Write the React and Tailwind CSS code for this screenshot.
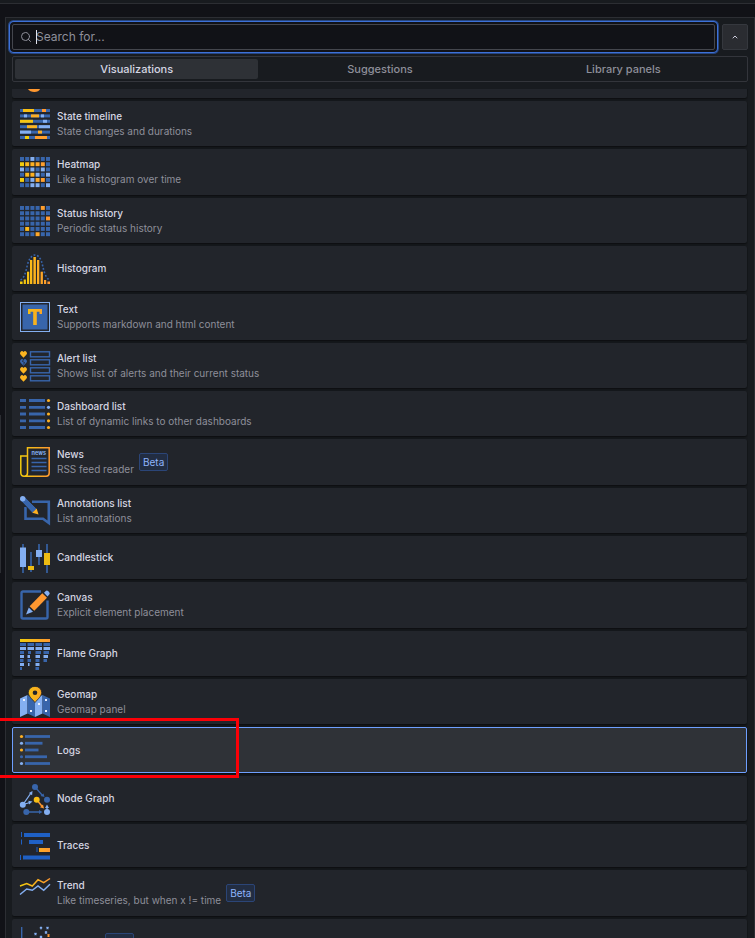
import { useState } from 'react'
import clsx from 'clsx'
import { ChevronUp, Search } from 'lucide-react'

const BLUE = '#3865ab'
const LIGHT = '#84aff1'
const ORANGE = 'url(#warm)'

const fills = { B: BLUE, L: LIGHT, O: ORANGE }

// each bar is [x, y, width, height, fill]
function Bars({ items }) {
    return items.map(([x, y, w, h, fill], i) => (
        <rect key={i} x={x} y={y} width={w} height={h} fill={fills[fill] || fill} />
    ))
}

function Cells({ rows, warm = ['#f2cc0c', '#fbb81c', '#fdb022', '#ffa828', '#ff9f2e', '#ff9830'] }) {
    return rows.map((row, r) =>
        row.split('').map((c, i) => (
            <rect key={`${r}-${i}`} x={i * 5.2} y={r * 5.25} width="4" height="3.9" fill={c === 'O' ? warm[i] : fills[c]} />
        ))
    )
}

function Heart({ x, y, fill }) {
    return <path transform={`translate(${x} ${y})`} fill={fill} d="M3.5 6.8 .6 3.7A2 2 0 0 1 .5 1 1.9 1.9 0 0 1 3.5 1 1.9 1.9 0 0 1 6.5 1a2 2 0 0 1-.1 2.7Z" />
}

const icons = {
    pie: <path d="M8 28h12c-1 4-10 4-12 0Z" fill="#ff9830" />,
    timeline: (
        <Bars items={[
            [0, 0, 30, 3, 'B'], [3, 0, 11, 3, '#f8be14'], [22, 0, 4, 3, '#ff9830'],
            [0, 5.4, 30, 3, 'B'], [4, 5.4, 3, 3, 'L'], [11, 5.4, 8, 3, '#fdae24'], [21, 5.4, 3, 3, 'L'],
            [0, 10.8, 30, 3, 'B'], [0, 10.8, 13, 3, '#f6c512'], [23, 10.8, 4, 3, 'L'],
            [0, 16.2, 30, 3, 'B'], [7, 16.2, 10, 3, '#fbb420'], [19, 16.2, 11, 3, 'L'],
            [0, 21.6, 30, 3, 'B'], [0, 21.6, 11, 3, 'L'], [18, 21.6, 4, 3, '#fdae24'],
            [0, 27, 30, 3, 'B'], [5, 27, 4, 3, '#f2cc0c'], [15, 27, 12, 3, '#ff9f2c'],
        ]} />
    ),
    heatmap: <Cells rows={['BBLBBB', 'OOOOOB', 'LBLBLB', 'BOOLBL', 'OBLOOB', 'BBLLBL']} />,
    status: <Cells rows={['BBBBOB', 'BBBBBB', 'BBBBBO', 'BBBBBB', 'BOBBBB', 'BBBOBB']} />,
    histogram: (
        <>
            <Bars items={[
                [0, 27.5, 2.6, 2.5, '#f2cc0c'], [3.7, 25.5, 2.2, 4.5, '#f4c60f'], [7, 17.7, 2.2, 12.3, '#f6c013'],
                [10, 6, 2.3, 24, '#f9ba18'], [13.4, 3, 2.5, 27, '#fbb31d'], [17, 6, 2.3, 24, '#fcad22'],
                [20.6, 17.7, 2.3, 12.3, '#fda626'], [24, 26, 2.2, 4, '#fe9f2b'], [27.4, 27.5, 2.6, 2.5, '#ff9830'],
            ]} />
            <path d="M.5 26C6 23 6.5 12 8.5 7.5S12.500 1 15 1s4.800 2 6.500 6.500S24 23 29.500 26" fill="none" stroke={BLUE} strokeWidth="1.6" strokeDasharray="1.8 1.8" />
        </>
    ),
    text: (
        <>
            <rect x=".5" y=".5" width="29" height="29" fill="none" stroke={LIGHT} />
            <rect x="2.5" y="2.5" width="25" height="25" fill={BLUE} />
            <path d="M8 7h14v5h-2.500V9.800H16.800V23h-3.600V9.800H10.500V12H8Z" fill={ORANGE} />
        </>
    ),
    alerts: (
        <>
            {[0, 8, 16, 24].map((y) => (
                <g key={y}>
                    <Heart x={0} y={y} fill={y === 8 ? BLUE : '#fbb420'} />
                    <rect x="10.5" y={y + 0.8} width="19" height="5" fill="none" stroke={BLUE} strokeWidth="1.4" />
                </g>
            ))}
            <path d="m3.500 8.500-1 2 2 1-1 2" fill="none" stroke="#22252b" strokeWidth=".8" />
        </>
    ),
    dashboards: [0, 6.8, 13.5, 20.3, 27].map((y, i) => (
        <g key={y}>
            <path d={`M0 ${y + 1.5}h6M9 ${y + 1.5}h16`} stroke={BLUE} strokeWidth="2.8" />
            <circle cx="28.5" cy={y + 1.5} r="1.6" fill={i === 1 ? LIGHT : '#fdb022'} />
        </g>
    )),
    news: (
        <>
            <path d="M7.500 26V.8h21.700V26c0 2-1 3.200-3 3.200H4C2 29.200.8 28 .8 26V9h6.700M7.500 26c0 2-1.200 3.200-3 3.200" fill="none" stroke={ORANGE} strokeWidth="1.5" />
            <path d="M11.500 11.500h15M11.500 15.500h15M11.500 19.500h15M11.500 23.500h15" stroke={BLUE} strokeWidth="1.3" />
            <text x="18.8" y="8.2" textAnchor="middle" fontSize="5.5" fontWeight="700" fill={LIGHT}>news</text>
        </>
    ),
    annotations: (
        <>
            <path d="M12 5.800h16.800V27L23 22.800H5.500V11" fill="none" stroke={BLUE} strokeWidth="2.6" />
            <path d="m.8 4.800 4-4L17 13l-4.500 4.200Z" fill={BLUE} stroke="#22252b" strokeWidth=".8" />
            <circle cx="2.7" cy="2.7" r="2.7" fill={LIGHT} />
            <path d="m12.300 16.800 4.400-4.200 1.800 6Z" fill="#fdb022" />
        </>
    ),
    candlestick: (
        <>
            <path d="M3 0v29M11 8v20M19 0v21M27 0v29" stroke={BLUE} strokeWidth="1.6" />
            <Bars items={[[0, 3.5, 6, 19.5, 'L'], [8, 22, 6, 4, '#ecbb13'], [16, 6, 6, 7, 'L'], [24, 9, 6, 12, '#ecbb13']]} />
        </>
    ),
    canvas: (
        <>
            <path d="M21 1.500H3A1.500 1.500 0 0 0 1.500 3v24A1.500 1.500 0 0 0 3 28.500h23a1.500 1.500 0 0 0 1.500-1.500V10.500" fill="none" stroke={BLUE} strokeWidth="2.4" />
            <path d="m22.300 3.200 4.700 4.600L14.300 20.800l-4.700-4.600Z" fill="#ff9830" />
            <path d="m8.800 17.500 4.200 4.200L6 24.500Z" fill={LIGHT} />
            <path d="m24 2.800 1.500-1.600a2 2 0 0 1 2.800 0l.8.8a2 2 0 0 1 0 2.800L27.500 6.500Z" fill={LIGHT} />
        </>
    ),
    flame: (
        <Bars items={[
            [0, 0, 30, 3, 'O'],
            [0, 4, 6, 3, 'B'], [7.5, 4, 6.5, 3, 'B'], [15.5, 4, 6.5, 3, 'B'], [23.5, 4, 6.5, 3, 'B'],
            [0, 8, 6, 3, 'L'], [7.5, 8, 6.5, 3, 'L'], [15.5, 8, 6.5, 3, 'L'], [23.5, 8, 6.5, 3, 'L'],
            [0, 12, 4, 3, 'B'], [8, 12, 3, 3, 'B'], [15.5, 12, 5.5, 3, 'B'], [23.5, 12, 5.5, 3, 'B'],
            [0, 16, 4, 3, 'L'], [7.5, 16, 2.5, 3, 'L'], [15.5, 16, 4.5, 3, 'L'], [23.5, 16, 4.5, 3, 'L'],
            [0, 20, 3.5, 3, 'B'], [7.5, 20, 3.5, 3, 'B'], [15.5, 20, 4, 3, 'B'], [23.5, 20, 3.5, 3, 'B'],
            [0, 24, 4, 3, 'L'], [8, 24, 1.5, 3, 'L'], [15.5, 24, 4, 3, 'L'],
            [0, 28, 2, 3, 'B'], [15.5, 28, 3.5, 3, 'B'],
        ]} />
    ),
    geomap: (
        <>
            <path d="M0 11.500 7.500 8v18.500L0 30ZM15 11.500 22.500 8v18.500L15 30Z" fill={LIGHT} />
            <path d="M7.500 8 15 11.500V30l-7.500-3.500ZM22.500 8l7.500 3.500V30l-7.500-3.500Z" fill={BLUE} />
            <path d="M15 15.500C12 12 8.300 9 8.300 5.600A6.300 6.300 0 0 1 15-.6a6.300 6.300 0 0 1 6.700 6.200C21.700 9 18 12 15 15.500Z" fill={ORANGE} stroke="#22252b" strokeWidth=".8" />
            <circle cx="15" cy="5.7" r="2.3" fill="#22252b" />
            <path d="M3 12h2v2H3ZM10 23h2v2h-2ZM18 16h2v2h-2ZM25 12h2v2h-2ZM25 23h2v2h-2Z" fill="#e8efff" />
        </>
    ),
    logs: [[30, 'O'], [22.5, 'L'], [18.5, 'O'], [27, 'B'], [30, 'L']].map(([end, dot], i) => (
        <g key={i}>
            <circle cx="1.5" cy={i * 6.75 + 1.5} r="1.6" fill={dot === 'O' ? '#fdb022' : fills[dot]} />
            <path d={`M5 ${i * 6.75 + 1.5}H${end}`} stroke={BLUE} strokeWidth="2.8" />
        </g>
    )),
    nodes: (
        <>
            <path d="m15 3 7.500 8.500M6.300 28H20" stroke={BLUE} strokeWidth="1.3" />
            <path d="m24.500 13-4-1 3-2.500ZM22.500 28l-3.500-2v4Z" fill={BLUE} />
            <path d="m3 20.500 8-11.500M3 20.500l7-2M27 28v-4" stroke={LIGHT} strokeWidth="1.3" />
            <path d="m12.500 7-.4 4.200-3.200-2.300ZM12.500 17.500 9 20.500l-.6-3.800ZM27 20.500l2 3.500h-4Z" fill={LIGHT} />
            <path d="m16.700 15.700 5.300 6.500" stroke="#ff9830" strokeWidth="1.4" />
            <path d="m24 24.500-4-1.300 3-2.700Z" fill="#ff9830" />
            <circle cx="15" cy="3" r="3" fill={BLUE} />
            <circle cx="27" cy="15.7" r="3" fill={BLUE} />
            <circle cx="6.3" cy="28" r="3" fill={BLUE} />
            <circle cx="2.8" cy="20.7" r="3" fill={LIGHT} />
            <circle cx="27" cy="28" r="3" fill={LIGHT} />
            <circle cx="16.7" cy="15.7" r="3" fill="#f9be14" />
        </>
    ),
    traces: (
        <Bars items={[
            [1, 0, 1, 5, '#1f60c4'], [4, 1, 26, 4, '#1f60c4'],
            [1, 7.5, 1, 5, '#1f60c4'], [9, 8, 14, 4, '#1f60c4'],
            [16.5, 15, 1, 5, '#1f60c4'], [19, 16, 11, 4, 'O'],
            [0, 23, 1, 5, '#1f60c4'], [3, 23.5, 27, 4, '#1f60c4'],
        ]} />
    ),
    trend: (
        <g fill="none" strokeWidth="1.5">
            <path d="m0 8 6.700-2.500L12.300 8 18 1.700l5.700 3L30 .5" stroke={ORANGE} />
            <path d="m0 16.500 6.700-5.500 5.600 1.300L18 8l5.700 4.300 6.300-6" stroke={LIGHT} />
        </g>
    ),
    xy: (
        <>
            <path d="M1.700 0v28.500H30" fill="none" stroke={BLUE} strokeWidth="1.4" />
            <path d="m20 0 2 2m0-2-2 2M26.500 0l2 2m0-2-2 2M14.500 6l2 2m0-2-2 2M25 4.500l2 2m0-2-2 2M20 9l2 2m0-2-2 2" stroke={LIGHT} strokeWidth="1.2" />
            <path d="m27.500 7.500 2 2m0-2-2 2" stroke="#ff9830" strokeWidth="1.2" />
        </>
    ),
}

// the first and last rows are only partly scrolled into view
const panels = [
    { id: 'piechart', icon: 'pie' },
    { id: 'state-timeline', title: 'State timeline', description: 'State changes and durations', icon: 'timeline' },
    { id: 'heatmap', title: 'Heatmap', description: 'Like a histogram over time', icon: 'heatmap' },
    { id: 'status-history', title: 'Status history', description: 'Periodic status history', icon: 'status' },
    { id: 'histogram', title: 'Histogram', icon: 'histogram' },
    { id: 'text', title: 'Text', description: 'Supports markdown and html content', icon: 'text' },
    { id: 'alertlist', title: 'Alert list', description: 'Shows list of alerts and their current status', icon: 'alerts' },
    { id: 'dashlist', title: 'Dashboard list', description: 'List of dynamic links to other dashboards', icon: 'dashboards' },
    { id: 'news', title: 'News', description: 'RSS feed reader', icon: 'news', beta: true },
    { id: 'annolist', title: 'Annotations list', description: 'List annotations', icon: 'annotations' },
    { id: 'candlestick', title: 'Candlestick', icon: 'candlestick', short: true },
    { id: 'canvas', title: 'Canvas', description: 'Explicit element placement', icon: 'canvas' },
    { id: 'flamegraph', title: 'Flame Graph', icon: 'flame' },
    { id: 'geomap', title: 'Geomap', description: 'Geomap panel', icon: 'geomap' },
    { id: 'logs', title: 'Logs', icon: 'logs' },
    { id: 'nodegraph', title: 'Node Graph', icon: 'nodes' },
    { id: 'traces', title: 'Traces', icon: 'traces', short: true },
    { id: 'trend', title: 'Trend', description: 'Like timeseries, but when x != time', icon: 'trend', beta: true },
    { id: 'xychart', icon: 'xy', beta: true },
]

const tabs = ['Visualizations', 'Suggestions', 'Library panels']

function PanelCard({ panel, selected, onSelect }) {
    return (
        <li className={clsx('flex shrink-0', panel.short ? 'h-[43px]' : 'h-[45px] nth-[3n]:h-[46px]')}>
            <button
                type="button"
                aria-label={panel.title || panel.id}
                aria-pressed={selected}
                onClick={onSelect}
                className={clsx(
                    'flex flex-1 items-center gap-[5px] rounded-xs border px-[7px] text-left shadow-[0_1px_2px_#0b0c0e]',
                    selected ? 'border-[#6e9fff] bg-[#2f3237]' : 'border-transparent bg-[#22252b]'
                )}
            >
                <svg aria-hidden="true" viewBox={panel.short ? '0 0 30 28' : '0 0 30 30'} className={clsx('w-[30px] shrink-0 overflow-visible', panel.short ? 'h-[28px]' : 'h-[30px]')}>
                    {icons[panel.icon]}
                </svg>
                <span className={clsx('flex flex-col pl-0.5 text-[10px] leading-[15px]', !panel.title && 'w-[45px]')}>
                    {panel.title && <span className="font-medium text-[#d5d6e2]">{panel.title}</span>}
                    {panel.description && <span className="text-[#8e8f9a]">{panel.description}</span>}
                </span>
                {panel.beta && (
                    <span className="rounded-xs border border-[#2b4577] bg-[#222d42] px-[3px] text-[10px] leading-4 text-[#8fb4fb]">Beta</span>
                )}
            </button>
        </li>
    )
}

export default function App() {
    const [query, setQuery] = useState('')
    const [tab, setTab] = useState('Visualizations')
    const [selected, setSelected] = useState('logs')

    return (
        <div className="relative flex h-screen flex-col overflow-hidden bg-[#111217] font-[Inter,'Liberation_Sans',sans-serif]">
            <svg aria-hidden="true" className="absolute size-0">
                <defs>
                    <linearGradient id="warm" gradientUnits="userSpaceOnUse" x1="0" y1="0" x2="30" y2="0">
                        <stop offset="0" stopColor="#f2cc0c" />
                        <stop offset="1" stopColor="#ff9830" />
                    </linearGradient>
                </defs>
            </svg>

            <div className="h-1 shrink-0 border-b border-[#2c2e33] bg-[#181b1f]" />

            <main className="mt-[13px] ml-[5px] flex min-h-0 flex-1 flex-col border border-b-0 border-[#2c2e33] bg-[#181b1f] px-1.5 pt-1.5">
                <div className="flex gap-[7px]">
                    <label className="relative flex h-[26px] flex-1 items-center gap-1 rounded-xs border border-[#44464d] bg-[#111217] px-[7px] shadow-[0_0_0_2px_#111217,0_0_0_3px_#3d71d9,0_0_0_4px_#274680]">
                        <Search className="size-3 text-[#8e8f9a]" strokeWidth={2} />
                        <span className="relative flex flex-1 items-center">
                            <input
                                type="text"
                                aria-label="Search for"
                                placeholder="Search for..."
                                value={query}
                                onChange={(e) => setQuery(e.target.value)}
                                className="w-full bg-transparent text-[12px] leading-4 text-[#ccccdc] outline-none placeholder:text-[#8e8f9a]"
                            />
                            <span className="absolute left-0 h-3.5 w-px bg-[#e4e4ee]" />
                        </span>
                    </label>
                    <button type="button" aria-label="Close" className="flex size-[26px] items-center justify-center rounded-xs border border-[#35383e] bg-[#2a2c31] text-[#ccccdc]">
                        <ChevronUp className="size-2" strokeWidth={3} />
                    </button>
                </div>

                <div role="tablist" className="mt-1.5 flex h-[26px] rounded-xs border border-[#33353b] p-0.5">
                    {tabs.map((name) => (
                        <button
                            key={name}
                            type="button"
                            role="tab"
                            aria-selected={tab === name}
                            onClick={() => setTab(name)}
                            className={clsx(
                                'flex flex-1 items-center justify-center rounded-xs text-[11px] font-medium',
                                tab === name ? 'bg-[#2e3136] text-[#d5d6e2]' : 'text-[#8e8f9a]'
                            )}
                        >
                            {name}
                        </button>
                    ))}
                </div>

                <div className="mt-[7px] min-h-0 flex-1 overflow-hidden">
                    <ul className="-mt-9 mr-px flex flex-col gap-[3px]">
                        {panels.map((panel) => (
                            <PanelCard
                                key={panel.id}
                                panel={panel}
                                selected={selected === panel.id}
                                onSelect={() => setSelected(panel.id)}
                            />
                        ))}
                    </ul>
                </div>
            </main>

            {/* splitter handle */}
            <div className="absolute top-[415px] left-0 h-[158px] w-px bg-[#2c2e33]" />
            {/* highlight box around the selected row */}
            <div className="pointer-events-none absolute top-[718px] -left-1 h-[60px] w-[243px] border-3 border-[#fb0007]" />
        </div>
    )
}
